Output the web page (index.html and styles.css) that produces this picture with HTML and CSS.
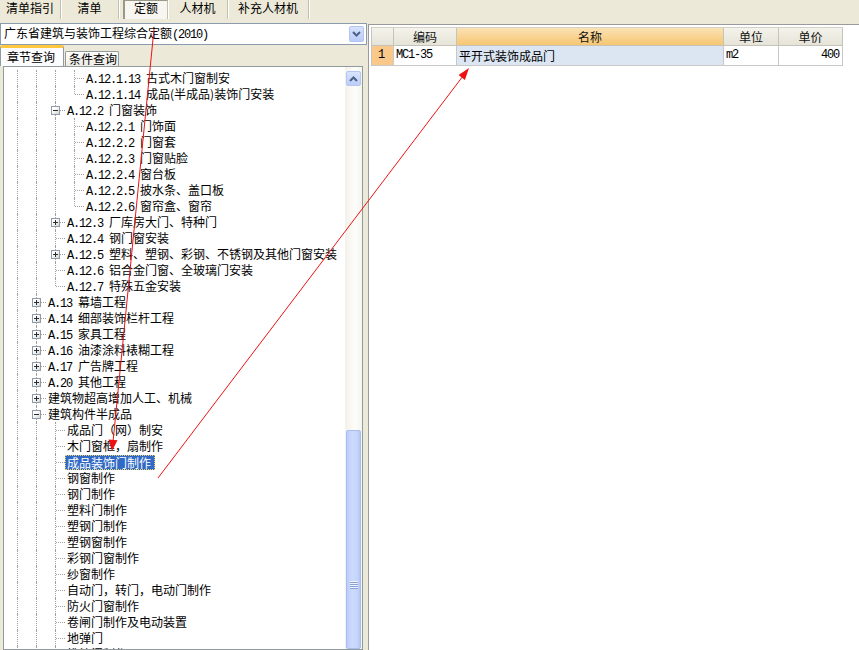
FILE: index.html
```html
<!DOCTYPE html>
<html lang="zh-CN">
<head>
<meta charset="utf-8">
<title>定额</title>
<link rel="stylesheet" href="styles.css">
</head>
<body>
<div class="app">
  <div class="toolbar">
    <div class="tab w1">清单指引</div>
    <div class="tab w2">清单</div>
    <div class="tab w3 on">定额</div>
    <div class="tab w4">人材机</div>
    <div class="tab w5">补充人材机</div>
  </div>
  <div class="main">
    <div class="left">
      <div class="combo">
        <span class="combo-text">广东省建筑与装饰工程综合定额<span class="code">(2010)</span></span>
        <span class="drop"><svg width="9" height="6" viewBox="0 0 9 6"><polyline points="1,1 4.5,4.5 8,1" fill="none" stroke="#4D6185" stroke-width="2"/></svg></span>
      </div>
      <div class="subtabs">
        <div class="stab active">章节查询</div>
        <div class="stab">条件查询</div>
      </div>
      <div class="tree">
        <div class="rows">
          <div class="row"><i class="g v"></i><i class="g v"></i><i class="g v"></i><i class="g t"></i><span class="lbl"><span class="code">A.12.1.13 </span>古式木门窗制安</span></div>
          <div class="row"><i class="g v"></i><i class="g v"></i><i class="g v"></i><i class="g l"></i><span class="lbl"><span class="code">A.12.1.14 </span>成品(半成品)装饰门安装</span></div>
          <div class="row"><i class="g v"></i><i class="g v"></i><i class="g t"><b class="box minus"></b></i><span class="lbl"><span class="code">A.12.2 </span>门窗装饰</span></div>
          <div class="row"><i class="g v"></i><i class="g v"></i><i class="g v"></i><i class="g t"></i><span class="lbl"><span class="code">A.12.2.1 </span>门饰面</span></div>
          <div class="row"><i class="g v"></i><i class="g v"></i><i class="g v"></i><i class="g t"></i><span class="lbl"><span class="code">A.12.2.2 </span>门窗套</span></div>
          <div class="row"><i class="g v"></i><i class="g v"></i><i class="g v"></i><i class="g t"></i><span class="lbl"><span class="code">A.12.2.3 </span>门窗贴脸</span></div>
          <div class="row"><i class="g v"></i><i class="g v"></i><i class="g v"></i><i class="g t"></i><span class="lbl"><span class="code">A.12.2.4 </span>窗台板</span></div>
          <div class="row"><i class="g v"></i><i class="g v"></i><i class="g v"></i><i class="g t"></i><span class="lbl"><span class="code">A.12.2.5 </span>披水条、盖口板</span></div>
          <div class="row"><i class="g v"></i><i class="g v"></i><i class="g v"></i><i class="g l"></i><span class="lbl"><span class="code">A.12.2.6 </span>窗帘盒、窗帘</span></div>
          <div class="row"><i class="g v"></i><i class="g v"></i><i class="g t"><b class="box plus"></b></i><span class="lbl"><span class="code">A.12.3 </span>厂库房大门、特种门</span></div>
          <div class="row"><i class="g v"></i><i class="g v"></i><i class="g t"></i><span class="lbl"><span class="code">A.12.4 </span>钢门窗安装</span></div>
          <div class="row"><i class="g v"></i><i class="g v"></i><i class="g t"><b class="box plus"></b></i><span class="lbl"><span class="code">A.12.5 </span>塑料、塑钢、彩钢、不锈钢及其他门窗安装</span></div>
          <div class="row"><i class="g v"></i><i class="g v"></i><i class="g t"></i><span class="lbl"><span class="code">A.12.6 </span>铝合金门窗、全玻璃门安装</span></div>
          <div class="row"><i class="g v"></i><i class="g v"></i><i class="g l"></i><span class="lbl"><span class="code">A.12.7 </span>特殊五金安装</span></div>
          <div class="row"><i class="g v"></i><i class="g t"><b class="box plus"></b></i><span class="lbl"><span class="code">A.13 </span>幕墙工程</span></div>
          <div class="row"><i class="g v"></i><i class="g t"><b class="box plus"></b></i><span class="lbl"><span class="code">A.14 </span>细部装饰栏杆工程</span></div>
          <div class="row"><i class="g v"></i><i class="g t"><b class="box plus"></b></i><span class="lbl"><span class="code">A.15 </span>家具工程</span></div>
          <div class="row"><i class="g v"></i><i class="g t"><b class="box plus"></b></i><span class="lbl"><span class="code">A.16 </span>油漆涂料裱糊工程</span></div>
          <div class="row"><i class="g v"></i><i class="g t"><b class="box plus"></b></i><span class="lbl"><span class="code">A.17 </span>广告牌工程</span></div>
          <div class="row"><i class="g v"></i><i class="g t"><b class="box plus"></b></i><span class="lbl"><span class="code">A.20 </span>其他工程</span></div>
          <div class="row"><i class="g v"></i><i class="g t"><b class="box plus"></b></i><span class="lbl">建筑物超高增加人工、机械</span></div>
          <div class="row"><i class="g v"></i><i class="g t"><b class="box minus"></b></i><span class="lbl">建筑构件半成品</span></div>
          <div class="row"><i class="g v"></i><i class="g v"></i><i class="g t"></i><span class="lbl">成品门（网）制安</span></div>
          <div class="row"><i class="g v"></i><i class="g v"></i><i class="g t"></i><span class="lbl">木门窗框，扇制作</span></div>
          <div class="row"><i class="g v"></i><i class="g v"></i><i class="g t"></i><span class="lbl sel">成品装饰门制作</span></div>
          <div class="row"><i class="g v"></i><i class="g v"></i><i class="g t"></i><span class="lbl">钢窗制作</span></div>
          <div class="row"><i class="g v"></i><i class="g v"></i><i class="g t"></i><span class="lbl">钢门制作</span></div>
          <div class="row"><i class="g v"></i><i class="g v"></i><i class="g t"></i><span class="lbl">塑料门制作</span></div>
          <div class="row"><i class="g v"></i><i class="g v"></i><i class="g t"></i><span class="lbl">塑钢门制作</span></div>
          <div class="row"><i class="g v"></i><i class="g v"></i><i class="g t"></i><span class="lbl">塑钢窗制作</span></div>
          <div class="row"><i class="g v"></i><i class="g v"></i><i class="g t"></i><span class="lbl">彩钢门窗制作</span></div>
          <div class="row"><i class="g v"></i><i class="g v"></i><i class="g t"></i><span class="lbl">纱窗制作</span></div>
          <div class="row"><i class="g v"></i><i class="g v"></i><i class="g t"></i><span class="lbl">自动门，转门，电动门制作</span></div>
          <div class="row"><i class="g v"></i><i class="g v"></i><i class="g t"></i><span class="lbl">防火门窗制作</span></div>
          <div class="row"><i class="g v"></i><i class="g v"></i><i class="g t"></i><span class="lbl">卷闸门制作及电动装置</span></div>
          <div class="row"><i class="g v"></i><i class="g v"></i><i class="g t"></i><span class="lbl">地弹门</span></div>
          <div class="row"><i class="g v"></i><i class="g v"></i><i class="g t"></i><span class="lbl">推拉门制作</span></div>
        </div>
        <div class="vscroll">
          <div class="sbtn"><svg width="9" height="6" viewBox="0 0 9 6"><polyline points="1,5 4.5,1.5 8,5" fill="none" stroke="#4D6185" stroke-width="2"/></svg></div>
          <div class="thumb"><span class="grip"></span></div>
        </div>
      </div>
    </div>
    <div class="right">
      <div class="grid">
        <div class="hc"></div>
        <div class="hc">编码</div>
        <div class="hc hot">名称</div>
        <div class="hc">单位</div>
        <div class="hc">单价</div>
        <div class="dc num code">1</div>
        <div class="dc code">MC1-35</div>
        <div class="dc name">平开式装饰成品门</div>
        <div class="dc code">m2</div>
        <div class="dc code price">400</div>
      </div>
    </div>
  </div>
  <svg class="arrows" width="859" height="650" viewBox="0 0 859 650">
    <line x1="154" y1="29" x2="113" y2="442" stroke="#EE1111" stroke-width="1"/>
    <polygon points="112,451 108.5,439.5 117.5,440.3" fill="#EE1111"/>
    <line x1="158" y1="478" x2="463" y2="76" stroke="#EE1111" stroke-width="1"/>
    <polygon points="469,68 458.6,75.1 464.9,80" fill="#EE1111"/>
  </svg>
</div>
</body>
</html>
```
FILE: styles.css
```css
* { box-sizing: border-box; }

body {
  margin: 0;
  background: #ECE9D8;
  font-family: "Noto Sans CJK SC", "Noto Sans", sans-serif;
  font-size: 12px;
  color: #000;
}

.app {
  width: 859px;
  height: 650px;
  position: relative;
  overflow: hidden;
  display: flex;
  flex-direction: column;
  background: #ECE9D8;
}

.code {
  font-family: "Liberation Mono", monospace;
  font-size: 12px;
  letter-spacing: -1.2px;
}

/* top toolbar tabs */
.toolbar {
  height: 22px;
  flex: none;
  display: flex;
}

.tab {
  height: 19px;
  line-height: 15px;
  text-align: center;
  border-right: 1px solid #C2BFB0;
  box-shadow: 1px 0 0 #FFFFFF;
  color: #000;
}

.tab.w1 { width: 61px; }
.tab.w2 { width: 58px; }
.tab.w3 { width: 45px; margin-left: 4px; }
.tab.w4 { width: 60px; }
.tab.w5 { width: 81px; }

.tab.on {
  background: #F7F6F0;
  border-left: 2px solid #9B9888;
  border-top: 1px solid #9B9888;
  line-height: 14px;
}

/* main area */
.main {
  flex: 1;
  min-height: 0;
  display: flex;
}

.left {
  width: 367px;
  flex: none;
  display: flex;
  flex-direction: column;
}

.combo {
  margin-top: 1px;
  height: 22px;
  flex: none;
  background: #fff;
  border: 1px solid #8C9CB0;
  display: flex;
  align-items: center;
  justify-content: space-between;
  padding: 0 2px 0 3px;
}

.combo-text { line-height: 18px; }

.drop {
  width: 15px;
  height: 16px;
  border-radius: 2px;
  background: linear-gradient(#D6E2FD, #B9CCF8);
  border: 1px solid #B2C5F1;
  display: flex;
  align-items: center;
  justify-content: center;
}

.subtabs {
  height: 21px;
  flex: none;
  display: flex;
  align-items: flex-end;
}

.stab {
  height: 15px;
  line-height: 14px;
  padding: 0 1px 0 3px;
  border: 1px solid #919B9C;
  border-bottom: none;
  border-radius: 2px 2px 0 0;
  background: linear-gradient(#FEFEFE, #ECEBE5);
  margin-left: 1px;
}

.stab.active {
  height: 21px;
  padding: 0 8px 0 6px;
  margin-left: 0;
  background: #FCFCFE;
  border-top: 3px solid #FFC73C;
  line-height: 17px;
  border-radius: 3px 2px 0 0;
}

/* tree panel */
.tree {
  flex: 1;
  min-height: 0;
  margin: 0 4px 0 3px;
  border: 1px solid #919B9C;
  background: #fff;
  display: flex;
  overflow: hidden;
}

.rows {
  flex: 1;
  padding: 3px 0 0 4px;
  overflow: hidden;
}

.row {
  height: 16px;
  display: flex;
  align-items: center;
  white-space: nowrap;
}

.g {
  width: 19px;
  height: 16px;
  flex: none;
  position: relative;
}

.g.v::before,
.g.t::before,
.g.l::before {
  content: "";
  position: absolute;
  left: 9px;
  top: 0;
  height: 16px;
  border-left: 1px dotted #A0A0A0;
}

.g.l::before { height: 8px; }

.g.t::after,
.g.l::after {
  content: "";
  position: absolute;
  left: 10px;
  right: 0;
  top: 8px;
  border-top: 1px dotted #A0A0A0;
}

.box {
  position: absolute;
  left: 5px;
  top: 4px;
  width: 9px;
  height: 9px;
  border: 1px solid #8E9AAE;
  background: linear-gradient(135deg, #FFFFFF 30%, #D8D5CA);
  z-index: 1;
}

.box::before {
  content: "";
  position: absolute;
  left: 1px;
  top: 3px;
  width: 5px;
  height: 1px;
  background: #2B2B2B;
}

.box.plus::after {
  content: "";
  position: absolute;
  left: 3px;
  top: 1px;
  width: 1px;
  height: 5px;
  background: #2B2B2B;
}

.lbl {
  line-height: 16px;
  height: 16px;
  padding: 0 2px;
}

.lbl.sel {
  background: #316AC5;
  color: #fff;
  outline: 1px dotted #E8D070;
  outline-offset: -1px;
  padding: 0 4px 0 2px;
  height: 15px;
  line-height: 15px;
}

/* scrollbar */
.vscroll {
  width: 17px;
  flex: none;
  display: flex;
  flex-direction: column;
  padding: 4px 1px 0 1px;
  background: linear-gradient(90deg, #F3F1EA, #FDFDFA 60%, #F5F4EF);
}

.sbtn {
  width: 15px;
  height: 15px;
  flex: none;
  border-radius: 2px;
  background: linear-gradient(#D9E4FD, #BCCEF8);
  border: 1px solid #B4C7F2;
  display: flex;
  align-items: center;
  justify-content: center;
}

.thumb {
  flex: 1;
  margin-top: 344px;
  border: 1px solid #A9BDEE;
  border-radius: 2px;
  background: linear-gradient(90deg, #BBCDF9, #CCDAFD 40%, #C4D4FC 80%, #B3C7F5);
  display: flex;
  justify-content: center;
}

.grip {
  margin-top: 150px;
  width: 8px;
  height: 8px;
  background: repeating-linear-gradient(#EEF3FE 0 1px, #8CA3DA 1px 2px);
}

/* right panel */
.right {
  flex: 1;
  margin: 2px 0 0 1px;
  border-left: 1px solid #9A9A9A;
  border-top: 1px solid #9A9A9A;
  background: #fff;
  padding: 2px 0 0 2px;
}

.grid {
  display: grid;
  grid-template-columns: 22px 63px 267px 55px 64px;
  grid-template-rows: 18px 20px;
  width: 472px;
  border-left: 1px solid #C6C6C6;
  border-top: 1px solid #D4D2C8;
}

.hc {
  background: linear-gradient(#F4F3EC, #E6E4D8);
  border-right: 1px solid #C6C4B8;
  border-bottom: 1px solid #C6C4B8;
  text-align: center;
  line-height: 17px;
  color: #111;
}

.hc.hot {
  background: linear-gradient(#FBE2B4, #F6C672);
}

.dc {
  border-right: 1px solid #C8C8C8;
  border-bottom: 1px solid #C8C8C8;
  line-height: 19px;
  padding: 0 2px;
  white-space: nowrap;
}

.dc.num {
  background: #FAC98A;
  text-align: center;
  padding: 0 3px 0 0;
}

.dc.name {
  background: #DCE6F3;
  padding-left: 2px;
}

.dc.price {
  text-align: right;
  padding-right: 3px;
}

/* annotation arrows over the page */
.arrows {
  position: absolute;
  left: 0;
  top: 0;
  pointer-events: none;
}
```
